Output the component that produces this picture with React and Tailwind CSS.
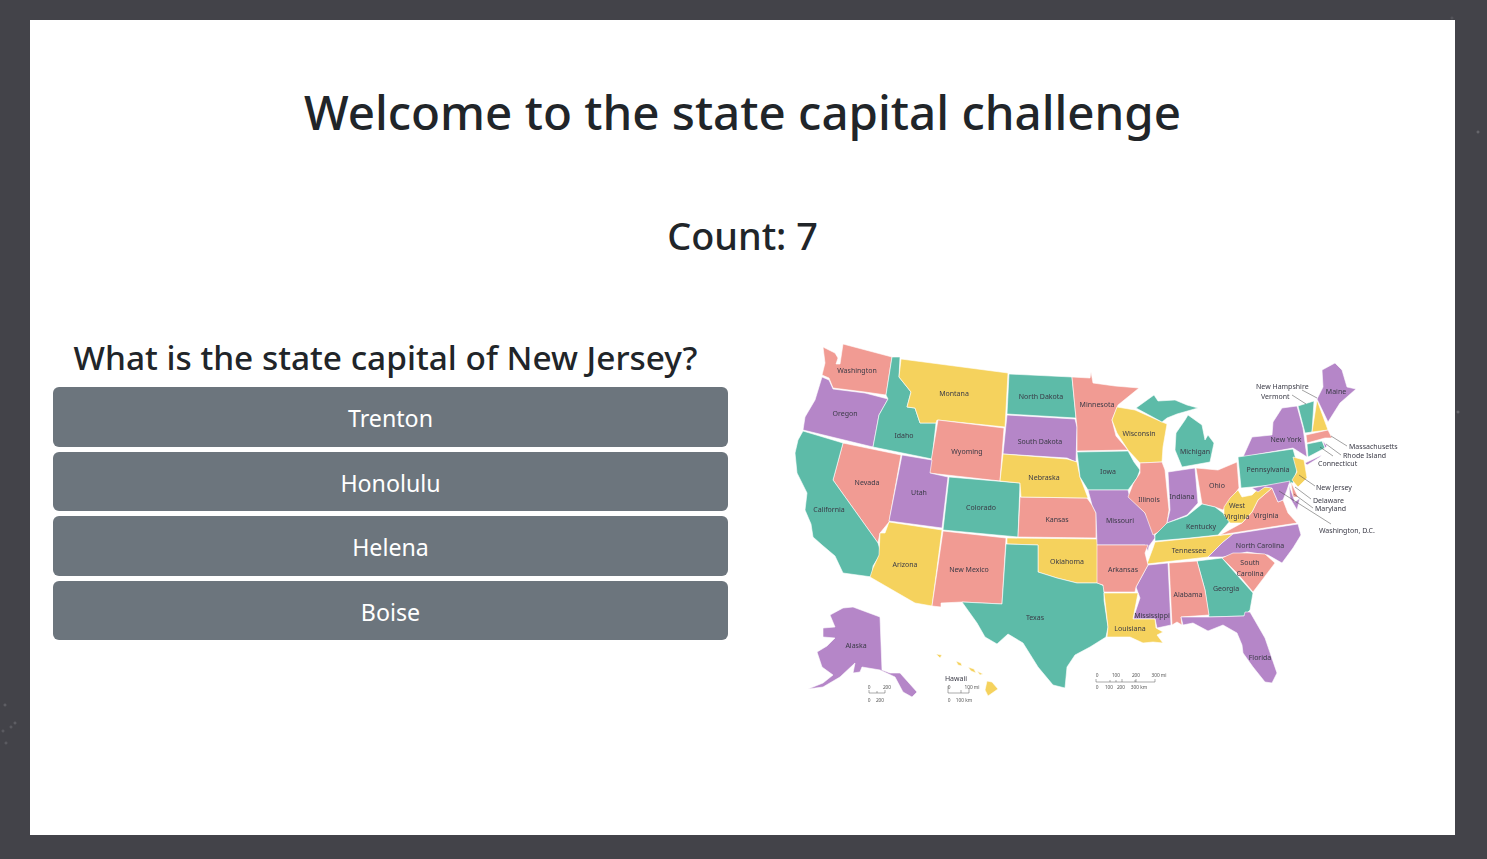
const FONT = "font-['Noto_Sans','Open_Sans',sans-serif]";

const SALMON = '#f19b93';
const PURPLE = '#b586c8';
const GREEN = '#5dbba8';
const YELLOW = '#f5d25d';

// state shapes are in page coordinates, the svg viewBox starts at 790,340
const shapes = [
    [SALMON, '823,347 835,353 838,358 836,364 840,364 843,344 892,357 886,395 865,392 833,388 829,378 822,375 825,363'],
    [PURPLE, '822,377 829,380 833,389 865,393 888,399 879,415 873,447 803,430 805,417 815,400'],
    [GREEN, '892,357 900,357 899,377 911,392 907,407 915,408 920,423 936,423 932,459 873,447 879,415 888,399 886,395'],
    [YELLOW, '901,359 1008,373 1005,427 937,420 936,423 920,423 915,408 907,407 911,392 899,377'],
    [GREEN, '1009,374 1072,377 1076,418 1007,414'],
    [PURPLE, '1007,415 1075,419 1077,427 1076,462 1067,458 1003,454'],
    [SALMON, '938,420 1004,428 1000,481 929,473'],
    [SALMON, '843,443 901,455 889,522 880,533 878,543 833,480'],
    [PURPLE, '902,455 932,460 930,473 948,477 942,528 889,521'],
    [GREEN, '949,477 1020,483 1018,537 943,530'],
    [GREEN, '803,431 843,443 833,480 878,543 881,553 873,566 872,577 843,573 835,556 822,545 813,537 811,524 805,510 807,493 797,473 795,453 798,440'],
    [YELLOW, '889,522 942,530 932,606 915,603 870,577 873,568 879,555 880,533 885,533'],
    [SALMON, '943,531 1006,538 1002,604 962,602 941,603 941,607 932,606'],
    [SALMON, '1020,497 1087,498 1092,505 1096,513 1096,538 1018,537'],
    [YELLOW, '1003,454 1067,459 1077,462 1080,477 1088,498 1021,497 1020,483 1000,481'],
    [YELLOW, '1007,538 1097,539 1099,558 1098,583 1077,583 1057,578 1038,572 1038,545 1007,544'],
    [GREEN, '1006,544 1038,545 1038,572 1057,578 1077,583 1098,583 1104,586 1104,600 1108,627 1106,637 1090,647 1075,655 1067,667 1065,688 1053,685 1038,667 1023,643 1008,634 997,644 985,637 977,623 962,602 1002,604'],
    [SALMON, '1072,377 1090,378 1091,372 1093,383 1115,386 1139,388 1118,405 1112,420 1116,436 1128,450 1077,451 1077,427 1076,418'],
    [YELLOW, '1117,407 1135,410 1162,422 1167,424 1163,447 1162,462 1140,463 1128,450 1117,433 1112,420'],
    [GREEN, '1077,452 1128,451 1134,462 1140,470 1137,478 1128,490 1088,490 1080,477'],
    [PURPLE, '1088,490 1128,490 1130,498 1145,513 1153,528 1155,538 1149,546 1148,551 1145,545 1097,545 1096,513 1092,505'],
    [SALMON, '1140,463 1162,462 1165,470 1169,510 1167,523 1162,530 1153,535 1145,513 1128,497 1133,484 1140,473'],
    [PURPLE, '1168,472 1195,468 1198,503 1187,515 1167,523 1170,510'],
    [SALMON, '1196,468 1218,470 1237,462 1239,488 1228,503 1223,510 1215,507 1202,504'],
    [GREEN, '1188,415 1202,425 1205,440 1208,435 1214,443 1210,462 1182,467 1175,450 1176,433 1185,420'],
    [GREEN, '1136,408 1154,395 1158,401 1175,400 1187,405 1198,408 1177,414 1167,418 1162,422'],
    [GREEN, '1155,535 1167,523 1187,516 1202,504 1215,507 1223,513 1230,521 1218,535 1190,538 1155,541'],
    [YELLOW, '1155,542 1233,534 1222,543 1208,557 1147,564 1153,548'],
    [SALMON, '1220,535 1242,523 1252,512 1258,500 1272,488 1278,502 1283,500 1288,513 1297,523'],
    [YELLOW, '1224,507 1230,498 1238,490 1242,497 1252,495 1257,490 1265,487 1272,488 1258,500 1252,512 1242,523 1230,523 1224,515'],
    [PURPLE, '1208,557 1222,543 1233,534 1298,524 1301,535 1293,548 1282,563 1268,555 1247,552 1223,557 1217,557'],
    [SALMON, '1222,558 1233,553 1247,553 1265,554 1275,563 1253,592 1237,573'],
    [GREEN, '1197,561 1222,558 1237,575 1253,593 1250,610 1244,616 1209,617 1205,590'],
    [SALMON, '1169,563 1197,561 1205,590 1209,615 1181,617 1182,625 1177,622 1172,625'],
    [PURPLE, '1148,565 1168,563 1171,625 1157,628 1155,619 1133,619 1140,598 1136,587'],
    [SALMON, '1097,545 1148,545 1145,553 1148,565 1136,587 1135,592 1104,592 1103,585 1097,583'],
    [YELLOW, '1104,593 1138,593 1133,619 1155,619 1156,628 1163,632 1157,635 1163,643 1153,642 1143,643 1130,637 1107,637 1108,627'],
    [PURPLE, '1181,617 1209,617 1244,616 1245,612 1250,612 1265,638 1277,673 1272,683 1265,682 1253,667 1243,653 1242,645 1237,633 1223,625 1208,631 1193,623 1183,625'],
    [PURPLE, '1297,406 1303,428 1307,457 1293,448 1243,457 1252,437 1272,435 1273,422 1282,408'],
    [PURPLE, '1305,463 1322,455 1320,457 1307,465'],
    [GREEN, '1298,406 1314,401 1312,432 1305,433'],
    [YELLOW, '1317,400 1328,430 1312,432'],
    [PURPLE, '1322,370 1335,363 1342,370 1347,387 1356,389 1340,403 1328,422 1317,399 1323,387'],
    [SALMON, '1306,435 1328,430 1332,438 1325,438 1307,443'],
    [GREEN, '1307,444 1322,441 1325,448 1308,457'],
    [PURPLE, '1323,441 1327,446 1325,448'],
    [GREEN, '1238,457 1293,449 1298,467 1293,483 1241,488'],
    [YELLOW, '1293,457 1304,460 1307,478 1298,487 1292,480 1297,472'],
    [SALMON, '1291,482 1298,497 1293,497'],
    [PURPLE, '1252,488 1290,481 1287,490 1283,500 1278,502 1272,488 1265,487 1258,492'],
    [PURPLE, '1289,485 1295,502 1300,498 1297,510 1290,498'],
    [PURPLE, '830,615 843,608 853,607 880,617 882,670 890,673 900,673 917,692 912,697 903,692 895,677 880,670 862,667 860,672 853,673 855,663 840,677 823,687 808,689 823,683 833,675 822,667 817,652 827,646 835,638 823,637 823,628 835,627'],
    [YELLOW, '936,654 942,655 940,658'],
    [YELLOW, '956,661 961,663 962,666 958,665'],
    [YELLOW, '968,667 974,669 976,673 971,671'],
    [YELLOW, '977,671 983,674 980,675'],
    [YELLOW, '987,681 992,682 998,689 988,696 985,690'],
];

const labels = [
    ['Washington', 857, 373], ['Oregon', 845, 416], ['Idaho', 904, 438], ['Montana', 954, 396],
    ['North Dakota', 1041, 399], ['South Dakota', 1040, 444], ['Wyoming', 967, 454], ['Nevada', 867, 485],
    ['Utah', 919, 495], ['Colorado', 981, 510], ['California', 829, 512], ['Nebraska', 1044, 480],
    ['Kansas', 1057, 522], ['Minnesota', 1097, 407], ['Wisconsin', 1139, 436], ['Iowa', 1108, 474],
    ['Michigan', 1195, 454], ['Illinois', 1149, 502], ['Indiana', 1182, 499], ['Ohio', 1217, 488],
    ['Missouri', 1120, 523], ['Kentucky', 1201, 529], ['West', 1237, 508], ['Virginia', 1237, 519],
    ['Virginia', 1266, 518], ['Pennsylvania', 1268, 472], ['New York', 1286, 442], ['Maine', 1336, 394],
    ['Arizona', 905, 567], ['New Mexico', 969, 572], ['Oklahoma', 1067, 564], ['Texas', 1035, 620],
    ['Arkansas', 1123, 572], ['Tennessee', 1189, 553], ['North Carolina', 1260, 548], ['South', 1250, 565],
    ['Carolina', 1250, 576], ['Georgia', 1226, 591], ['Alabama', 1188, 597], ['Mississippi', 1152, 618],
    ['Louisiana', 1130, 631], ['Florida', 1260, 660], ['Alaska', 856, 648], ['Hawaii', 956, 681],
];

const callouts = [
    ['New Hampshire', 1256, 389], ['Vermont', 1261, 399], ['Massachusetts', 1349, 449], ['Rhode Island', 1343, 458],
    ['Connecticut', 1318, 466], ['New Jersey', 1316, 490], ['Delaware', 1313, 503], ['Maryland', 1315, 511],
    ['Washington, D.C.', 1319, 533],
];

const leaders = [
    '1302,390 1317,398', '1292,395 1306,404', '1347,446 1331,436', '1341,455 1326,444', '1333,456 1320,447',
    '1315,486 1299,475', '1311,499 1295,487', '1313,508 1294,494', '1331,524 1279,491',
];

const scales = [
    'M869 690V693H885V690M877 691V693', 'M948 686V693H969V688M961 690V693',
    'M1096 679V682H1155V679M1110 680V682M1116 680V682M1122 679V682M1135 680V682M1136 679V682',
];

const scaleText = [
    ['0', 869, 689], ['200', 887, 689], ['0', 869, 702], ['200', 880, 702],
    ['0', 949, 689], ['100 mi', 972, 689], ['0', 949, 702], ['100 km', 964, 702],
    ['0', 1097, 677], ['100', 1116, 677], ['200', 1136, 677], ['300 mi', 1159, 677],
    ['0', 1097, 689], ['100', 1109, 689], ['200', 1121, 689], ['300 km', 1139, 689],
];

const UsMap = () => (
    <svg viewBox="790 340 620 380" className="w-[620px] h-[380px] blur-[0.3px]">
        {shapes.map(([fill, points], i) => (
            <polygon key={i} points={points} fill={fill} stroke="#fff" strokeWidth="0.6" strokeLinejoin="round" />
        ))}
        {leaders.map((line, i) => (
            <polyline key={i} points={line} fill="none" stroke="#444" strokeWidth="0.5" />
        ))}
        {scales.map((d, i) => (
            <path key={i} d={d} fill="none" stroke="#555" strokeWidth="0.5" />
        ))}
        <g fontFamily="'Noto Sans', sans-serif" fontSize="7" fill="#3a3a46">
            {labels.map(([name, x, y], i) => (
                <text key={i} x={x} y={y} textAnchor="middle">{name}</text>
            ))}
            {callouts.map(([name, x, y], i) => (
                <text key={i} x={x} y={y}>{name}</text>
            ))}
        </g>
        <g fontFamily="'Noto Sans', sans-serif" fontSize="4.8" fill="#555" textAnchor="middle">
            {scaleText.map(([name, x, y], i) => (
                <text key={i} x={x} y={y}>{name}</text>
            ))}
        </g>
    </svg>
);

const answers = ['Trenton', 'Honolulu', 'Helena', 'Boise'];

const App = () => {
    return (
        <div className={`h-[859px] overflow-hidden bg-[#434349] bg-[radial-gradient(circle_at_1478px_132px,#77777c,transparent_2px),radial-gradient(circle_at_1458px_412px,#77777c,transparent_2px),radial-gradient(circle_at_5px_705px,#6c6c72,transparent_2px),radial-gradient(circle_at_15px_723px,#6c6c72,transparent_2px),radial-gradient(circle_at_11px_727px,#66666c,transparent_2px),radial-gradient(circle_at_3px_731px,#66666c,transparent_2px),radial-gradient(circle_at_6px_743px,#66666c,transparent_2px),radial-gradient(circle_at_1452px_18px,#5c5c62,transparent_2px)] pl-[30px] pr-[32px] pt-[20px] ${FONT}`}>
            <div className="h-[815px] bg-white text-[#212529]">
                <h1 className="pt-[58px] text-center text-[47.5px] leading-[68px] font-medium">
                    Welcome to the state capital challenge
                </h1>
                <h2 className="mt-[65px] text-center text-[37.8px] leading-[50px] font-medium">Count: 7</h2>
                <div className="mt-[74px] flex">
                    <div className="ml-[23px] w-[675px] shrink-0">
                        <h3 className="pr-[10px] text-center text-[33.4px] leading-[44px] font-medium">
                            What is the state capital of New Jersey?
                        </h3>
                        <div className="mt-[8px] flex flex-col gap-[5px]">
                            {answers.map((answer) => (
                                <button
                                    key={answer}
                                    className="h-[59.5px] rounded-[6px] bg-[#6c757d] pt-[4px] text-[23.2px] text-white"
                                >
                                    {answer}
                                </button>
                            ))}
                        </div>
                    </div>
                    <div className="ml-[62px] mt-[5px]">
                        <UsMap />
                    </div>
                </div>
            </div>
        </div>
    );
};

export default App;
